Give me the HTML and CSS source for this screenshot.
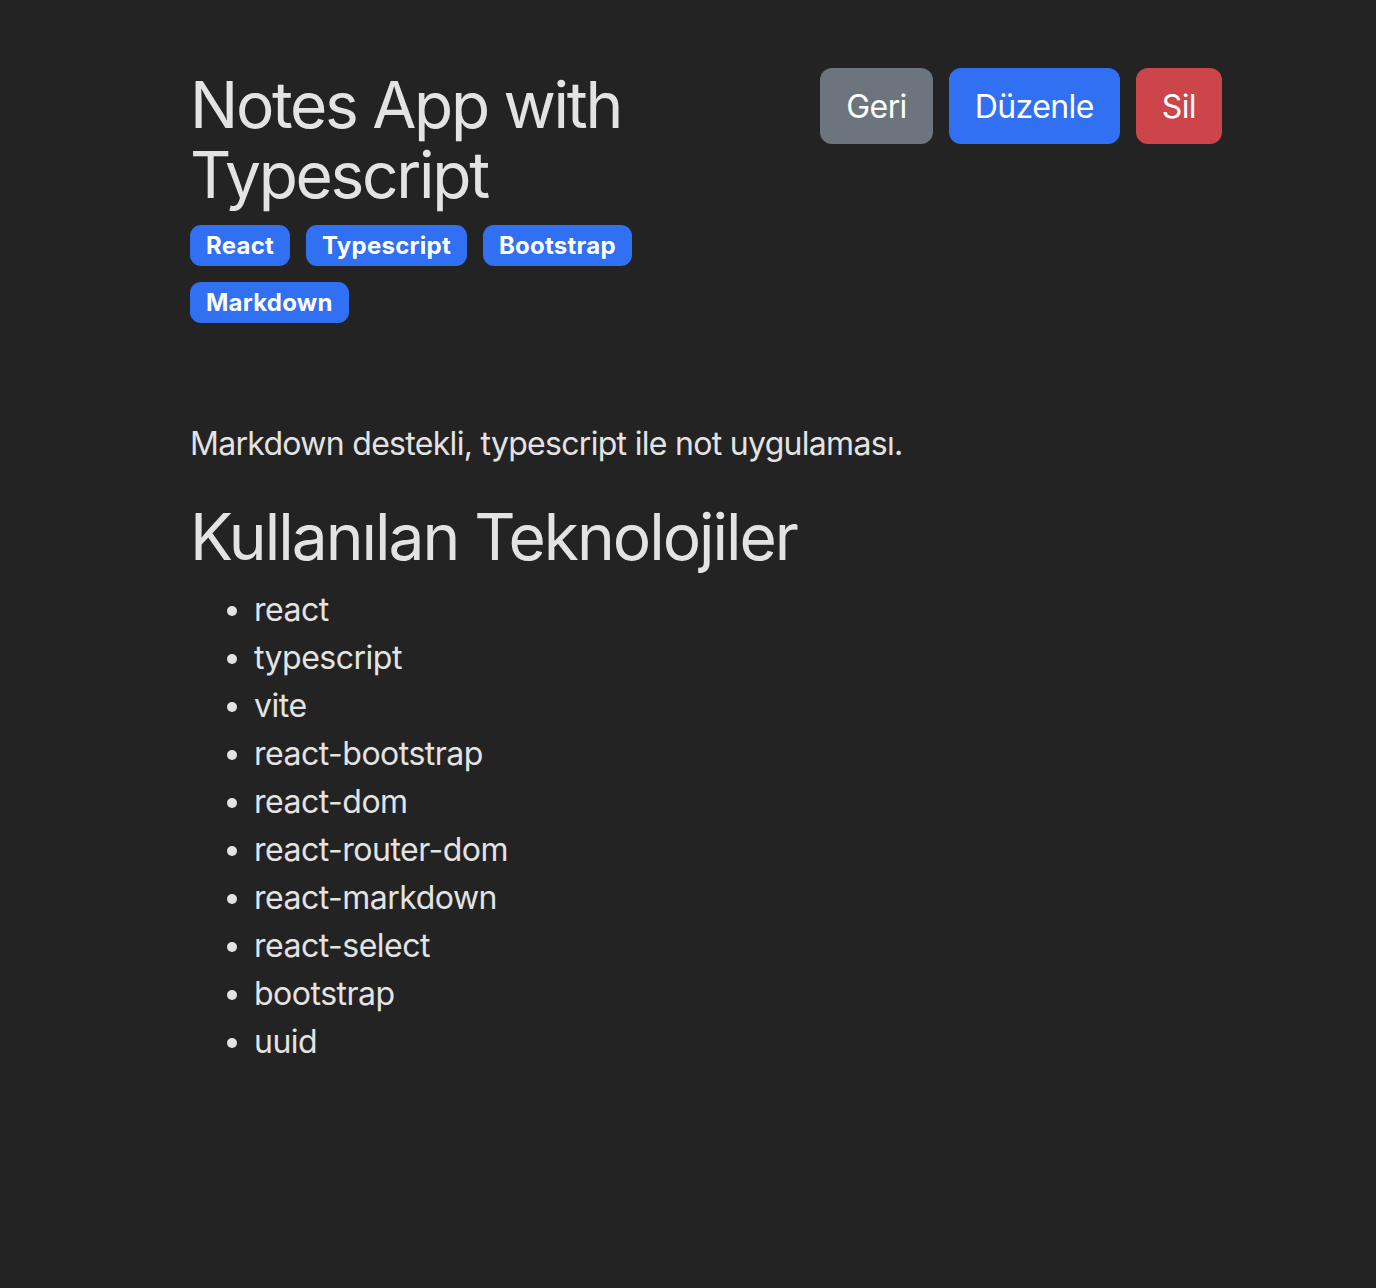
FILE: index.html
```html
<!DOCTYPE html>
<html lang="tr">
<head>
<meta charset="utf-8">
<title>Notes App with Typescript</title>
<link rel="stylesheet" href="styles.css">
</head>
<body>
<main class="container">
  <header class="note-header">
    <div class="note-info">
      <h1 class="note-title">Notes App with Typescript</h1>
      <div class="tags">
        <span class="badge">React</span>
        <span class="badge">Typescript</span>
        <span class="badge">Bootstrap</span>
        <span class="badge">Markdown</span>
      </div>
    </div>
    <div class="actions">
      <button class="btn btn-secondary">Geri</button>
      <button class="btn btn-primary">Düzenle</button>
      <button class="btn btn-danger">Sil</button>
    </div>
  </header>
  <article class="markdown">
    <p>Markdown destekli, typescript ile not uygulaması.</p>
    <h1>Kullanılan Teknolojiler</h1>
    <ul>
      <li>react</li>
      <li>typescript</li>
      <li>vite</li>
      <li>react-bootstrap</li>
      <li>react-dom</li>
      <li>react-router-dom</li>
      <li>react-markdown</li>
      <li>react-select</li>
      <li>bootstrap</li>
      <li>uuid</li>
    </ul>
  </article>
</main>
</body>
</html>
```

FILE: styles.css
```css
html, body {
  margin: 0;
  padding: 0;
  background: #232323;
}

body {
  color: #e3e3e3;
  font-family: Inter, "Noto Sans", "Liberation Sans", sans-serif;
  font-size: 32px;
  line-height: 48px;
  min-height: 1288px;
}

.container {
  width: 1032px;
  margin-left: 190px;
  padding-top: 68px;
}

.note-header {
  display: flex;
  justify-content: space-between;
  align-items: flex-start;
}

.note-info {
  flex: 1;
  max-width: 600px;
}

.note-title {
  margin: 2px 0 15px;
  font-size: 64px;
  line-height: 70px;
  font-weight: 400;
  letter-spacing: -2.3px;
}

.tags {
  display: flex;
  flex-wrap: wrap;
  gap: 16px;
  max-width: 460px;
}

.badge {
  display: inline-block;
  background: #3170f3;
  color: #ffffff;
  font-size: 24px;
  line-height: 25px;
  font-weight: 700;
  padding: 8px 16px;
  border-radius: 11px;
  letter-spacing: 0.25px;
}

.actions {
  display: flex;
  gap: 16px;
}

.btn {
  font-family: inherit;
  font-size: 32px;
  line-height: 48px;
  font-weight: 400;
  color: #ffffff;
  padding: 13px 24px 11px;
  border: 2px solid transparent;
  border-radius: 12px;
  letter-spacing: -0.6px;
  cursor: pointer;
}

.btn-secondary { background: #6c757d; border-color: #6c757d; }
.btn-primary { background: #3170f3; border-color: #3170f3; }
.btn-danger { background: #cc454b; border-color: #cc454b; }

.markdown {
  margin-top: 97px;
}

.markdown p {
  margin: 0 0 30px;
  letter-spacing: -0.7px;
}

.markdown h1 {
  margin: 0 0 11px;
  font-size: 64px;
  line-height: 77px;
  font-weight: 400;
  letter-spacing: -2px;
}

.markdown ul {
  margin: 0;
  padding-left: 64px;
}

.markdown li {
  line-height: 48px;
  letter-spacing: -0.5px;
}
```
